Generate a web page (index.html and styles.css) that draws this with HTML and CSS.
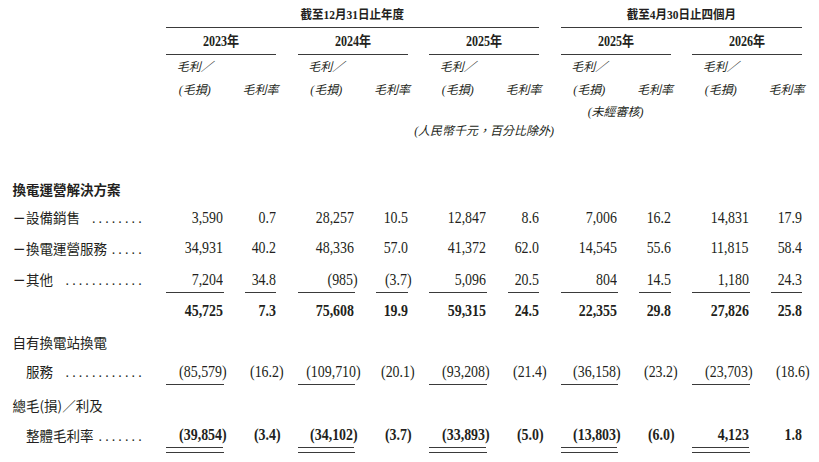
FILE: index.html
```html
<!DOCTYPE html>
<html lang="zh-Hant">
<head>
<meta charset="utf-8">
<title>毛利／(毛損)</title>
<link rel="stylesheet" href="styles.css">
</head>
<body>
<div class="sheet">
  <div class="row r-period">
    <div></div>
    <div class="s6 period"><span class="pq">截至12月31日止年度</span></div>
    <div class="s4 period"><span class="pq">截至4月30日止四個月</span></div>
  </div>
  <div class="row r-year">
    <div></div>
    <div class="s2 year"><span class="sq">2023年</span></div>
    <div class="s2 year"><span class="sq">2024年</span></div>
    <div class="s2 year"><span class="sq">2025年</span></div>
    <div class="s2 year"><span class="sq">2025年</span></div>
    <div class="s2 year"><span class="sq">2026年</span></div>
  </div>
  <div class="row r-hd first">
    <div></div>
    <div class="hd">毛利／</div><div></div>
    <div class="hd">毛利／</div><div></div>
    <div class="hd">毛利／</div><div></div>
    <div class="hd">毛利／</div><div></div>
    <div class="hd">毛利／</div><div></div>
  </div>
  <div class="row r-hd">
    <div></div>
    <div class="hd">(毛損)</div><div class="hd">毛利率</div>
    <div class="hd">(毛損)</div><div class="hd">毛利率</div>
    <div class="hd">(毛損)</div><div class="hd">毛利率</div>
    <div class="hd">(毛損)</div><div class="hd">毛利率</div>
    <div class="hd">(毛損)</div><div class="hd">毛利率</div>
  </div>
  <div class="row r-note">
    <div></div>
    <div class="hd at8">(未經審核)</div>
  </div>
  <div class="row r-unit">
    <div></div>
    <div class="hd at6">(人民幣千元，百分比除外)</div>
  </div>

  <div class="row r0">
    <div class="lab strong">換電運營解決方案</div>
  </div>
  <div class="row r1">
    <div class="lab"><span><b class="dash">－</b>設備銷售</span><span class="dots">........</span></div>
    <div class="n"><span class="v">3,590</span></div><div class="p"><span class="v">0.7</span></div>
    <div class="n"><span class="v">28,257</span></div><div class="p"><span class="v">10.5</span></div>
    <div class="n"><span class="v">12,847</span></div><div class="p"><span class="v">8.6</span></div>
    <div class="n"><span class="v">7,006</span></div><div class="p"><span class="v">16.2</span></div>
    <div class="n"><span class="v">14,831</span></div><div class="p"><span class="v">17.9</span></div>
  </div>
  <div class="row r2">
    <div class="lab"><span><b class="dash">－</b>換電運營服務</span><span class="dots">.....</span></div>
    <div class="n"><span class="v">34,931</span></div><div class="p"><span class="v">40.2</span></div>
    <div class="n"><span class="v">48,336</span></div><div class="p"><span class="v">57.0</span></div>
    <div class="n"><span class="v">41,372</span></div><div class="p"><span class="v">62.0</span></div>
    <div class="n"><span class="v">14,545</span></div><div class="p"><span class="v">55.6</span></div>
    <div class="n"><span class="v">11,815</span></div><div class="p"><span class="v">58.4</span></div>
  </div>
  <div class="row r3">
    <div class="lab"><span><b class="dash">－</b>其他</span><span class="dots">............</span></div>
    <div class="n u"><span class="v">7,204</span></div><div class="p u"><span class="v">34.8</span></div>
    <div class="n u"><span class="v ng">(985)</span></div><div class="p u"><span class="v ng">(3.7)</span></div>
    <div class="n u"><span class="v">5,096</span></div><div class="p u"><span class="v">20.5</span></div>
    <div class="n u"><span class="v">804</span></div><div class="p u"><span class="v">14.5</span></div>
    <div class="n u"><span class="v">1,180</span></div><div class="p u"><span class="v">24.3</span></div>
  </div>
  <div class="row r4 bold">
    <div class="lab"></div>
    <div class="n"><span class="v">45,725</span></div><div class="p"><span class="v">7.3</span></div>
    <div class="n"><span class="v">75,608</span></div><div class="p"><span class="v">19.9</span></div>
    <div class="n"><span class="v">59,315</span></div><div class="p"><span class="v">24.5</span></div>
    <div class="n"><span class="v">22,355</span></div><div class="p"><span class="v">29.8</span></div>
    <div class="n"><span class="v">27,826</span></div><div class="p"><span class="v">25.8</span></div>
  </div>
  <div class="row r5">
    <div class="lab">自有換電站換電</div>
  </div>
  <div class="row r6">
    <div class="lab indent"><span>服務</span><span class="dots">............</span></div>
    <div class="n u"><span class="v ng">(85,579)</span></div><div class="p"><span class="v ng">(16.2)</span></div>
    <div class="n u"><span class="v ng">(109,710)</span></div><div class="p"><span class="v ng">(20.1)</span></div>
    <div class="n u"><span class="v ng">(93,208)</span></div><div class="p"><span class="v ng">(21.4)</span></div>
    <div class="n u"><span class="v ng">(36,158)</span></div><div class="p"><span class="v ng">(23.2)</span></div>
    <div class="n u"><span class="v ng">(23,703)</span></div><div class="p"><span class="v ng">(18.6)</span></div>
  </div>
  <div class="row r7">
    <div class="lab">總毛(損)／利及</div>
  </div>
  <div class="row r8 bold">
    <div class="lab indent"><span>整體毛利率</span><span class="dots">.......</span></div>
    <div class="n dbl"><span class="v ng">(39,854)</span></div><div class="p"><span class="v ng">(3.4)</span></div>
    <div class="n dbl"><span class="v ng">(34,102)</span></div><div class="p"><span class="v ng">(3.7)</span></div>
    <div class="n dbl"><span class="v ng">(33,893)</span></div><div class="p"><span class="v ng">(5.0)</span></div>
    <div class="n dbl"><span class="v ng">(13,803)</span></div><div class="p"><span class="v ng">(6.0)</span></div>
    <div class="n dbl"><span class="v">4,123</span></div><div class="p"><span class="v">1.8</span></div>
  </div>
</div>
</body>
</html>
```

FILE: styles.css
```css
html, body {
  margin: 0;
  padding: 0;
  background: #ffffff;
}

body {
  color: #231f20;
  font-family: "Liberation Serif", "Noto Sans CJK TC", serif;
  width: 819px;
  height: 462px;
  overflow: hidden;
}

.sheet {
  display: flex;
  flex-direction: column;
}

.row {
  display: grid;
  grid-template-columns: 144.75px repeat(5, 57.5px 31.5px);
  column-gap: 21.25px;
}

.row > div {
  box-sizing: border-box;
  white-space: nowrap;
  min-width: 0;
}

.s6 { grid-column: span 6; }
.s4 { grid-column: span 4; }
.s2 { grid-column: span 2; }
.at6 { grid-column: 6 / span 2; }
.at8 { grid-column: 8 / span 2; }

/* header rows */
.r-period { height: 28px; }
.period {
  text-align: center;
  font-weight: bold;
  font-size: 12.5px;
  line-height: 18px;
  padding-top: 6px;
  border-bottom: 1px solid #3a3a3a;
}
.pq {
  display: inline-block;
  transform: scaleX(0.92);
}

.r-year { height: 27px; }
.year {
  text-align: center;
  font-weight: bold;
  font-size: 14px;
  line-height: 18px;
  padding-top: 5px;
  border-bottom: 1px solid #3a3a3a;
}

.sq {
  display: inline-block;
  transform: scaleX(0.86);
}

.hd {
  text-align: center;
  font-style: italic;
  font-size: 12px;
  display: flex;
  justify-content: center;
}

.r-hd { line-height: 23px; }
.r-hd.first { padding-top: 1px; }
.r-note { line-height: 20px; }
.r-unit { line-height: 18px; }

/* body rows */
.lab {
  font-family: "Noto Sans CJK TC", sans-serif;
  font-size: 13.5px;
  padding-left: 12.5px;
  display: flex;
  align-items: baseline;
}
.lab.indent { padding-left: 26px; }
.lab.strong { font-weight: 600; }
.dash { font-weight: bold; }

.dots {
  margin-left: auto;
  font-family: "Liberation Serif", serif;
  font-size: 14px;
  letter-spacing: 3.1px;
}

.n, .p {
  text-align: right;
  font-size: 16px;
}
.n { padding-right: 1px; }

.bold .n, .bold .p { font-weight: bold; }

.v {
  display: inline-block;
  transform: scaleX(0.87);
  transform-origin: right center;
}
.v.ng { margin-right: -4px; }

.u { border-bottom: 1px solid #3a3a3a; }

.dbl {
  border-bottom: 1px solid #3a3a3a;
  padding-bottom: 4px;
}
.dbl::after {
  content: "";
  display: block;
  margin-top: 2px;
  border-bottom: 1px solid #3a3a3a;
}

.r0 { margin-top: 35px; line-height: 28px; }
.r1 { line-height: 29px; }
.r2 { line-height: 30px; }
.r3 { line-height: 25px; }
.r3 > div { padding-top: 2px; }
.r4 { line-height: 36px; }
.r5 { line-height: 27px; }
.r6 { line-height: 25px; }
.r6 > div { padding-top: 3px; }
.r7 { line-height: 40px; }
.r8 { line-height: 20px; }
```
